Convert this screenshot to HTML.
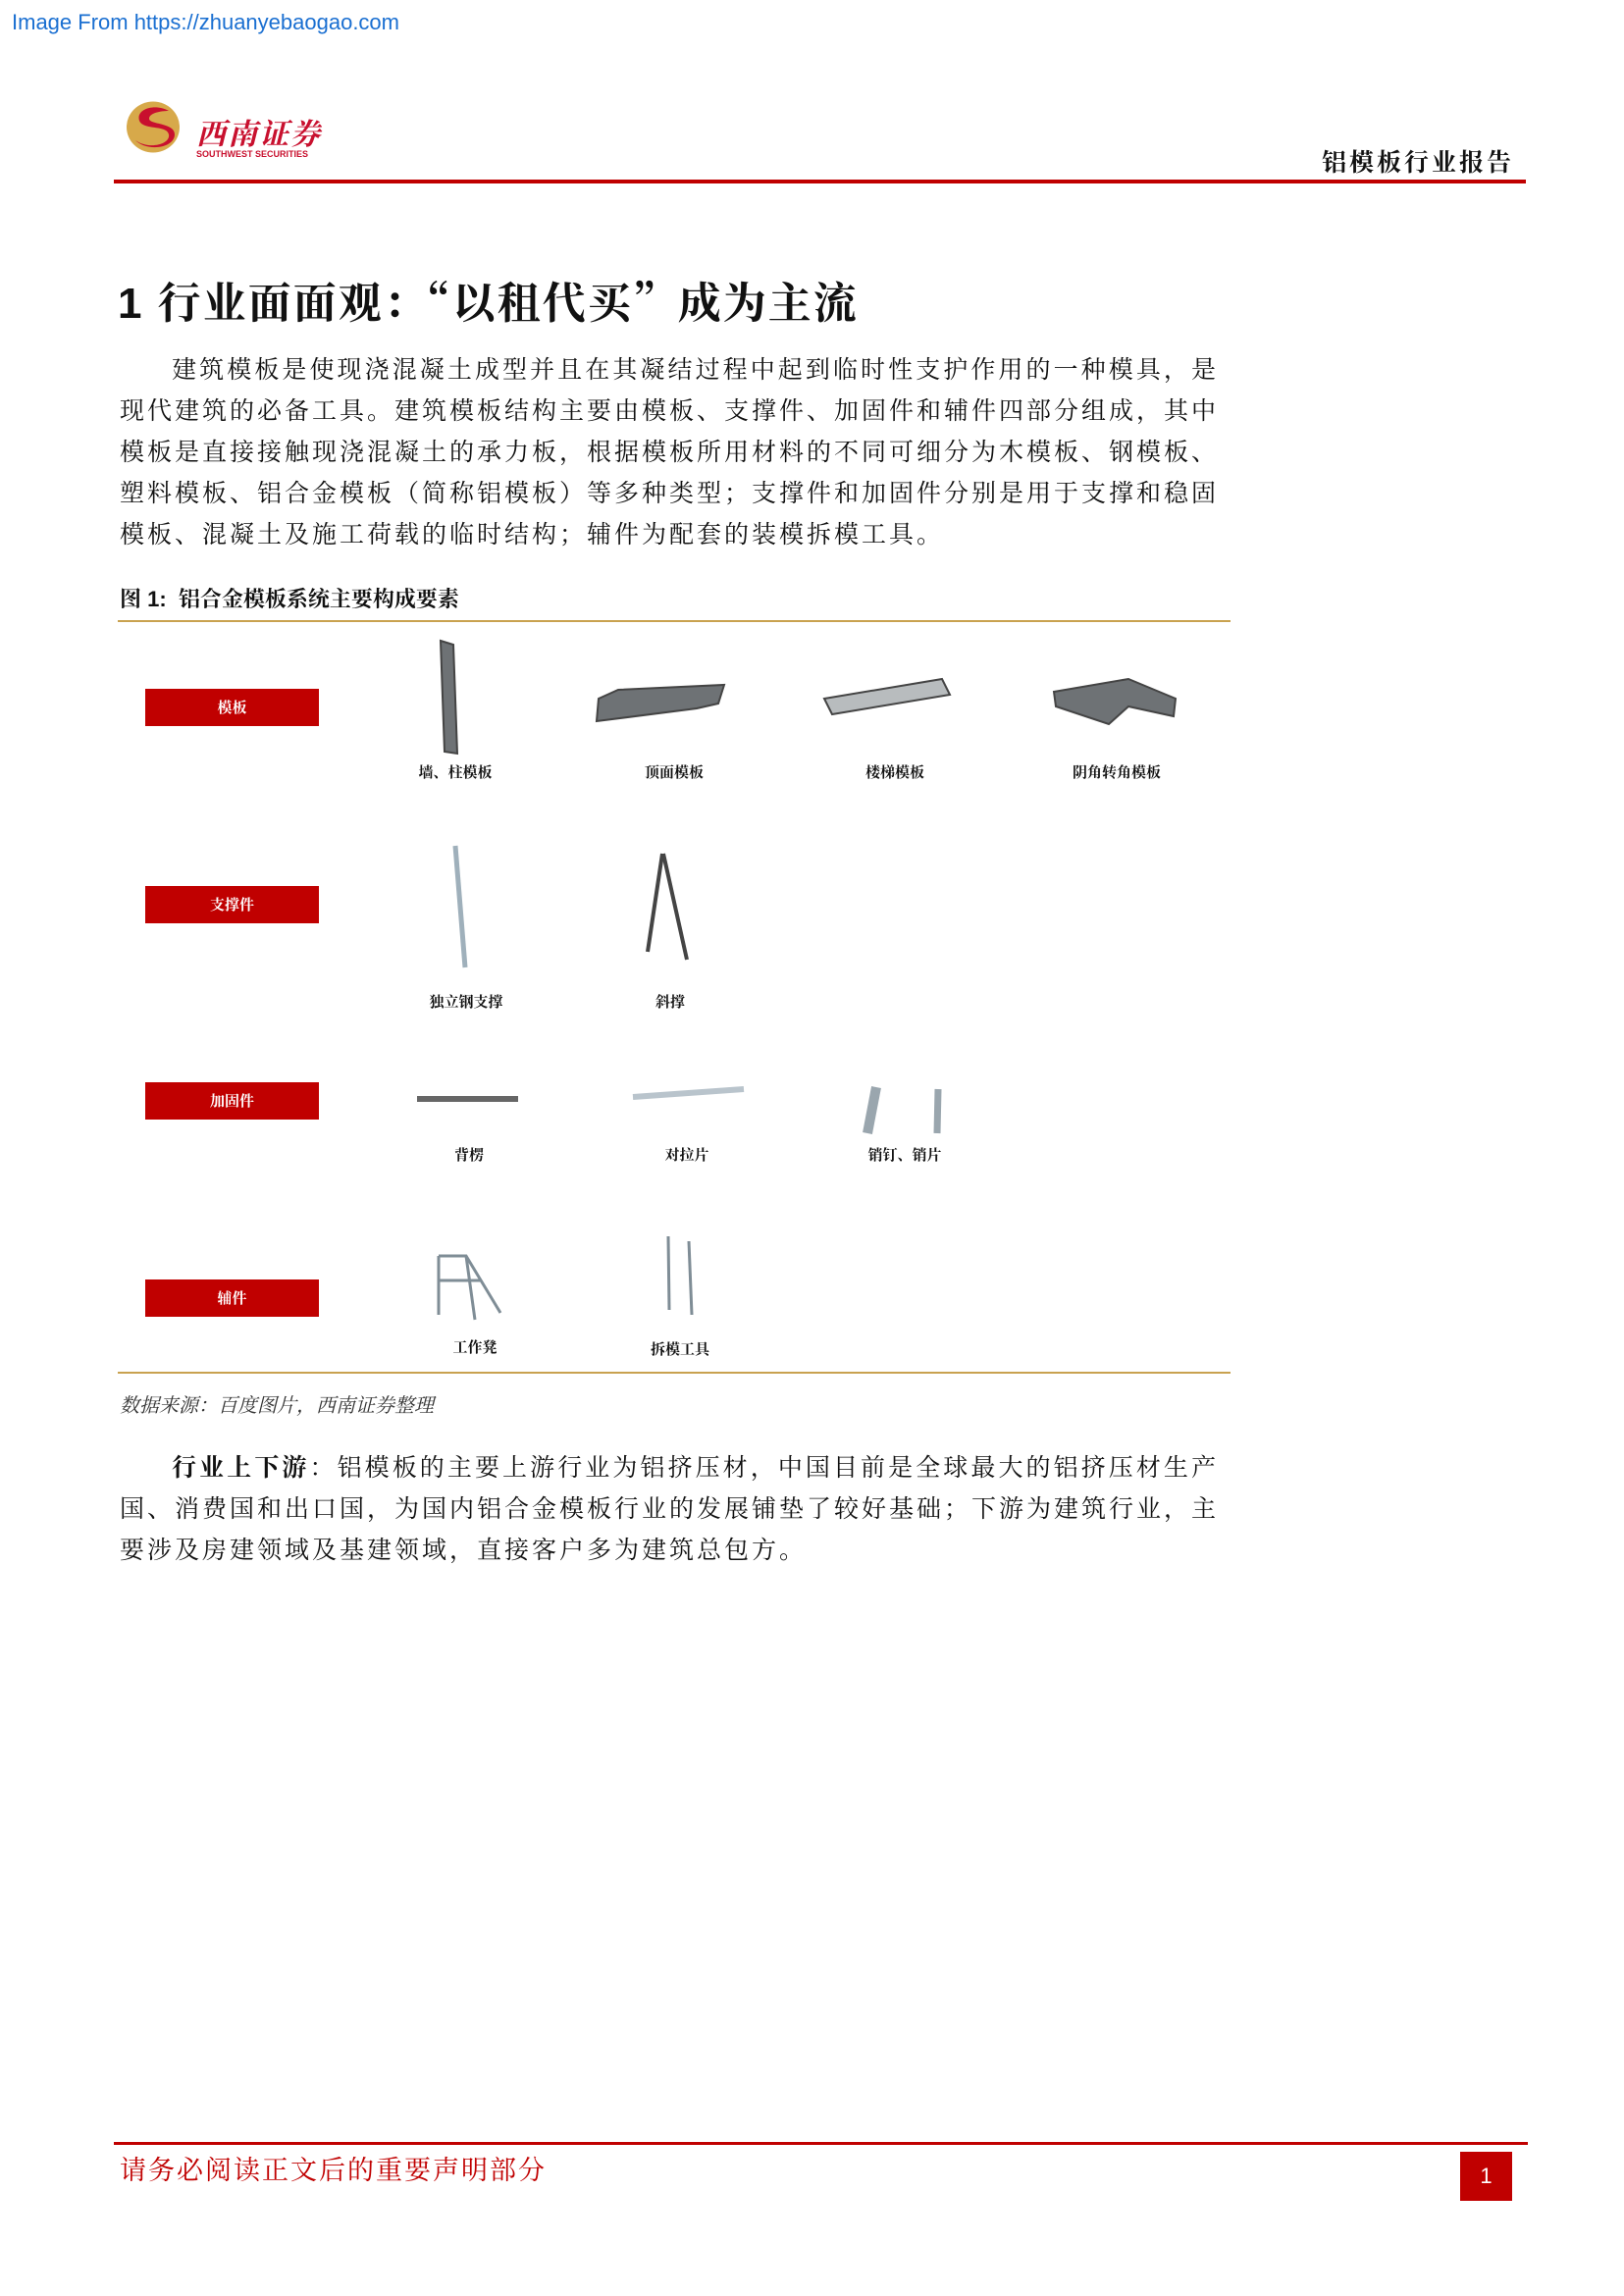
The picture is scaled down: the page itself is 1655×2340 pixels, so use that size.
<!DOCTYPE html>
<html><head><meta charset="utf-8">
<style>
body{margin:0;width:1655px;height:2340px;background:#fff;position:relative;overflow:hidden;font-family:"Liberation Serif","Noto Serif CJK SC",serif;color:#111}
.a{position:absolute;white-space:nowrap}
.p{position:absolute;left:122px;width:1117px;font-size:25px;line-height:42px}
.p div{text-align:justify;text-align-last:justify;height:42px}
.p div.l{text-align-last:left}
.rb{position:absolute;left:148px;width:177px;height:38px;background:#c00000;color:#fff;font-size:15px;font-weight:bold;text-align:center;line-height:38px;font-family:"Noto Serif CJK SC",serif}
.lb{position:absolute;font-size:15px;font-weight:bold;transform:translateX(-50%);white-space:nowrap;font-family:"Noto Serif CJK SC",serif}
.q{font-family:"Noto Serif CJK SC",serif}
</style></head><body>
<div class="a" style="left:12px;top:10px;font-family:'Liberation Sans',sans-serif;font-size:22px;color:#1a6fd1">Image From https://zhuanyebaogao.com</div>

<svg class="a" style="left:128px;top:103px" width="56" height="53" viewBox="0 0 56 53">
<ellipse cx="28" cy="26.5" rx="27" ry="26" fill="#d7a94a"/>
<path d="M44 10 C30 2 10 8 14 20 C18 30 42 24 44 34 C46 44 24 50 10 40 C22 52 50 48 50 34 C50 22 24 24 24 18 C24 12 36 10 44 10Z" fill="#c8102e"/>
</svg>
<div class="a" style="left:200px;top:112px;font-size:30px;font-weight:bold;color:#c8102e;font-family:'Noto Serif CJK SC',serif;font-style:italic;letter-spacing:2px">西南证券</div>
<div class="a" style="left:200px;top:152px;font-size:9px;font-weight:bold;color:#c8102e;font-family:'Liberation Sans',sans-serif">SOUTHWEST SECURITIES</div>

<div class="a" style="left:1347px;top:146px;font-size:25px;font-weight:bold;letter-spacing:3px;font-family:'Noto Serif CJK SC',serif">铝模板行业报告</div>
<div class="a" style="left:116px;top:183px;width:1439px;height:4px;background:#c00000"></div>

<div class="a" style="left:120px;top:273px;font-size:44px;font-weight:bold;font-family:'Liberation Sans','Noto Serif CJK SC',serif;letter-spacing:2px">1 行业面面观：<span class="q">“</span>以租代买<span class="q">”</span>成为主流</div>

<div class="p" style="top:357px">
<div>&emsp;&emsp;建筑模板是使现浇混凝土成型并且在其凝结过程中起到临时性支护作用的一种模具，是</div>
<div>现代建筑的必备工具。建筑模板结构主要由模板、支撑件、加固件和辅件四部分组成，其中</div>
<div>模板是直接接触现浇混凝土的承力板，根据模板所用材料的不同可细分为木模板、钢模板、</div>
<div>塑料模板、铝合金模板（简称铝模板）等多种类型；支撑件和加固件分别是用于支撑和稳固</div>
<div class="l" style="letter-spacing:3px">模板、混凝土及施工荷载的临时结构；辅件为配套的装模拆模工具。</div>
</div>

<div class="a" style="left:122px;top:594px;font-size:22px;font-weight:bold;font-family:'Liberation Sans','Noto Serif CJK SC',serif">图 1:&nbsp; 铝合金模板系统主要构成要素</div>
<div class="a" style="left:120px;top:632px;width:1134px;height:2px;background:#c9a24f"></div>

<div class="rb" style="top:702px">模板</div>
<div class="rb" style="top:903px">支撑件</div>
<div class="rb" style="top:1103px">加固件</div>
<div class="rb" style="top:1304px">辅件</div>

<svg class="a" style="left:0;top:0" width="1655" height="1420">
<g fill="#6e7275" stroke="#444" stroke-width="2">
<polygon points="449,653 462,657 466,768 453,766"/>
<polygon points="610,712 630,703 738,698 732,717 710,722 608,735"/>
<polygon points="840,712 960,692 968,708 848,728" fill="#b8bcbe"/>
<polygon points="1074,705 1150,692 1198,712 1196,730 1150,720 1130,738 1076,720"/>
</g>
<g stroke="#9fb0bb" stroke-width="5" fill="none">
<line x1="464" y1="862" x2="474" y2="986"/>
</g>
<g stroke="#444" stroke-width="4" fill="none"><line x1="675" y1="870" x2="660" y2="970"/><line x1="676" y1="870" x2="700" y2="978"/></g>
<line x1="425" y1="1120" x2="528" y2="1120" stroke="#666" stroke-width="6"/>
<line x1="645" y1="1118" x2="758" y2="1110" stroke="#b9c4cc" stroke-width="6"/>
<line x1="893" y1="1108" x2="884" y2="1155" stroke="#9aa6ae" stroke-width="10"/>
<line x1="956" y1="1110" x2="955" y2="1155" stroke="#9aa6ae" stroke-width="7"/>
<g stroke="#7f8d96" stroke-width="3" fill="none"><path d="M447 1280 L447 1340 M475 1280 L484 1345 M447 1280 L475 1280 L510 1338 M447 1305 L490 1305"/></g>
<g stroke="#7f8d96" stroke-width="3"><line x1="681" y1="1260" x2="682" y2="1335"/><line x1="702" y1="1265" x2="705" y2="1340"/></g>
</svg>

<div class="lb" style="left:464px;top:776px">墙、柱模板</div>
<div class="lb" style="left:687px;top:776px">顶面模板</div>
<div class="lb" style="left:912px;top:776px">楼梯模板</div>
<div class="lb" style="left:1138px;top:776px">阴角转角模板</div>
<div class="lb" style="left:475px;top:1010px">独立钢支撑</div>
<div class="lb" style="left:683px;top:1010px">斜撑</div>
<div class="lb" style="left:478px;top:1166px">背楞</div>
<div class="lb" style="left:700px;top:1166px">对拉片</div>
<div class="lb" style="left:922px;top:1166px">销钉、销片</div>
<div class="lb" style="left:484px;top:1362px">工作凳</div>
<div class="lb" style="left:693px;top:1364px">拆模工具</div>

<div class="a" style="left:120px;top:1398px;width:1134px;height:2px;background:#c9a24f"></div>
<div class="a" style="left:122px;top:1416px;font-size:20px;font-style:italic;color:#333">数据来源：百度图片，西南证券整理</div>

<div class="p" style="top:1476px">
<div>&emsp;&emsp;<b>行业上下游</b>：铝模板的主要上游行业为铝挤压材，中国目前是全球最大的铝挤压材生产</div>
<div>国、消费国和出口国，为国内铝合金模板行业的发展铺垫了较好基础；下游为建筑行业，主</div>
<div class="l" style="letter-spacing:3px">要涉及房建领域及基建领域，直接客户多为建筑总包方。</div>
</div>

<div class="a" style="left:116px;top:2183px;width:1441px;height:3px;background:#c00000"></div>
<div class="a" style="left:122px;top:2190px;font-size:27px;color:#c00000;letter-spacing:2px">请务必阅读正文后的重要声明部分</div>
<div class="a" style="left:1488px;top:2193px;width:53px;height:50px;background:#c00000;color:#fff;font-family:'Liberation Sans',sans-serif;font-size:22px;text-align:center;line-height:50px">1</div>
</body></html>
